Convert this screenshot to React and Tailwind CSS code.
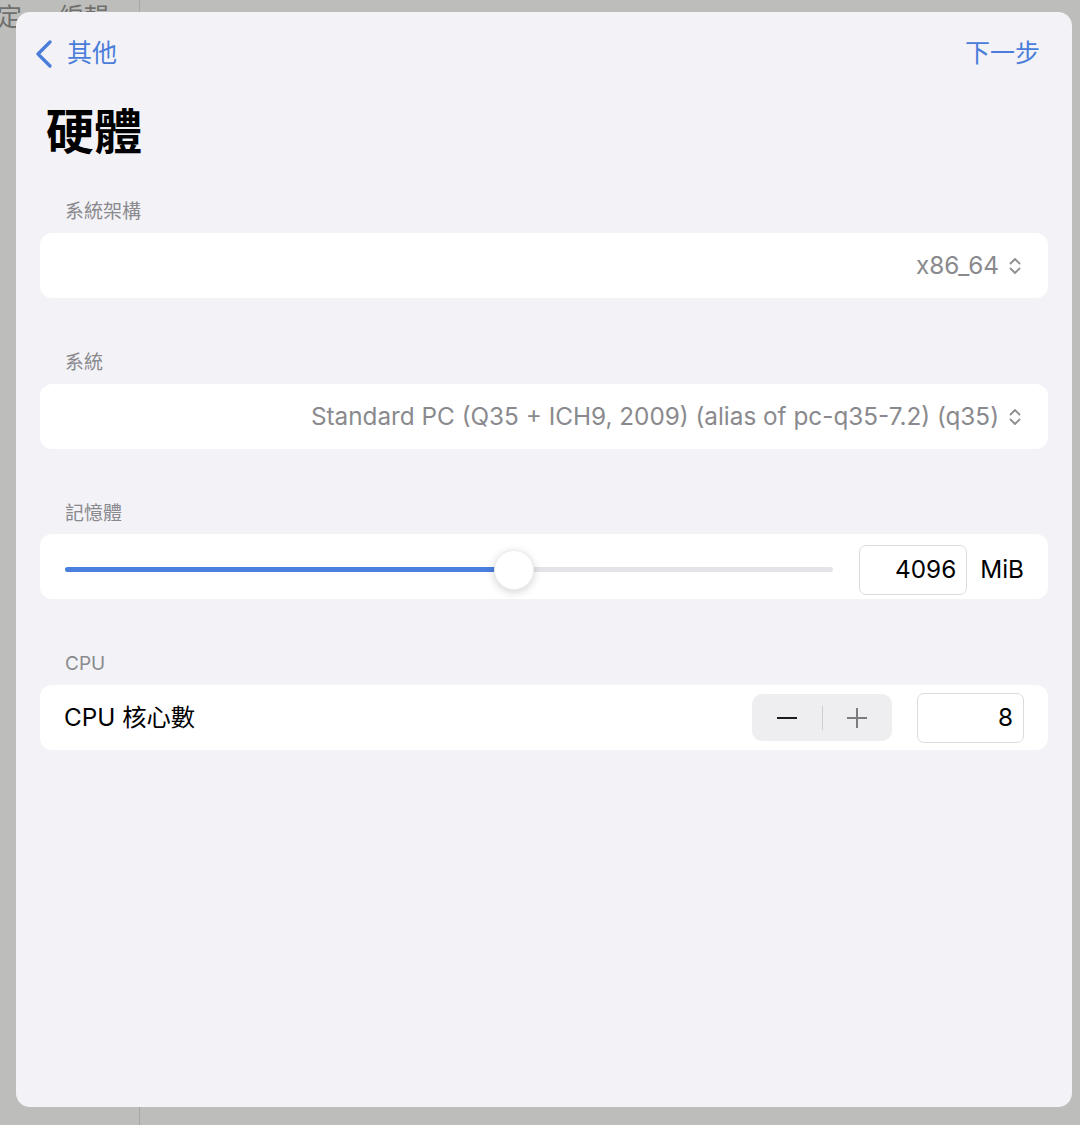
import { useState } from "react";

const font = { fontFamily: "Inter, 'Noto Sans CJK TC', 'Noto Sans', sans-serif" };

const UpDown = () => (
    <svg className="w-[14px] h-[20px] ml-[9px]" viewBox="0 0 14 20" fill="none" stroke="#8e8e93" strokeWidth="1.8" strokeLinecap="round" strokeLinejoin="round">
        <path d="M2.5 7.5L7 3l4.5 4.5" />
        <path d="M2.5 12.5L7 17l4.5-4.5" />
    </svg>
);

const Label = ({ children, first }) => (
    <div className={`h-[22px] leading-[22px] text-[19px] text-[#8a8a8e] pl-[25px] mb-[10px] ${first ? "mt-[41px]" : "mt-[54px]"}`}>
        {children}
    </div>
);

const Card = ({ children, className = "" }) => (
    <div className={`h-[65px] bg-white rounded-[12px] flex items-center ${className}`}>{children}</div>
);

export default function App() {
    const [mem] = useState(4096);
    const pct = 58.4;

    return (
        <div className="relative w-[1080px] h-[1125px] bg-[#bdbebb] overflow-hidden" style={font}>
            {/* page behind the sheet */}
            <div className="flex h-full">
                <div className="w-[140px] h-full border-r border-[#a7a8a4] flex items-start gap-[37px] pt-[2px] text-[25px] text-[#6f706d] leading-[30px]">
                    <span className="-ml-[3px]">定</span>
                    <span>編輯</span>
                </div>
            </div>

            {/* sheet */}
            <div className="absolute left-[16px] top-[12px] w-[1056px] h-[1095px] bg-[#f2f2f7] rounded-[14px] px-[24px] pt-[20px]">
                <div className="h-[44px] flex items-center justify-between">
                    <div className="flex items-center text-[#4a7dda]">
                        <svg className="w-[18px] h-[28px] ml-[-5px]" viewBox="0 0 18 28" fill="none" stroke="currentColor" strokeWidth="3.2" strokeLinecap="round" strokeLinejoin="round">
                            <path d="M15 2L3 14l12 12" />
                        </svg>
                        <span className="text-[25px] ml-[14px]">其他</span>
                    </div>
                    <span className="text-[25px] text-[#4a7dda] mr-[8px]">下一步</span>
                </div>

                <h1 className="mt-[28px] text-[48px] leading-[56px] font-bold text-black pl-[6px]">硬體</h1>

                <Label first>系統架構</Label>
                <Card className="justify-end pr-[26px]">
                    <span className="text-[24.3px] text-[#8a8a8e]">x86_64</span>
                    <UpDown />
                </Card>

                <Label>系統</Label>
                <Card className="justify-end pr-[26px]">
                    <span className="text-[24.3px] text-[#8a8a8e]">Standard PC (Q35 + ICH9, 2009) (alias of pc-q35-7.2) (q35)</span>
                    <UpDown />
                </Card>

                <Label>記憶體</Label>
                <Card className="pl-[25px] pr-[24px] pt-[6px] -mt-[1px]">
                    <div className="flex-1 relative h-[40px] flex items-center">
                        <div className="w-full h-[5px] rounded-full bg-[#e3e3e8]" />
                        <div className="absolute left-0 h-[5px] rounded-full bg-[#4a7fde]" style={{ width: `${pct}%` }} />
                        <div
                            className="absolute w-[40px] h-[40px] rounded-full bg-white shadow-[0_2px_8px_rgba(0,0,0,0.18)] border border-[#eeeeee]"
                            style={{ left: `calc(${pct}% - 20px)` }}
                        />
                    </div>
                    <div className="ml-[26px] w-[108px] h-[50px] rounded-[7px] border border-[#dcdcdc] flex items-center justify-end pr-[10px] text-[24.3px] text-black">
                        {mem}
                    </div>
                    <span className="ml-[13px] text-[24.3px] text-black">MiB</span>
                </Card>

                <Label>CPU</Label>
                <Card className="pl-[24px] pr-[24px]">
                    <span className="flex-1 text-[24.3px] text-black">CPU 核心數</span>
                    <div className="w-[140px] h-[47px] rounded-[10px] bg-[#eeeef0] flex items-center">
                        <div className="flex-1 flex justify-center">
                            <div className="w-[20px] h-[2px] bg-[#1c1c1e]" />
                        </div>
                        <div className="w-px h-[24px] bg-[#cfcfd2]" />
                        <div className="flex-1 flex justify-center">
                            <svg className="w-[20px] h-[20px]" viewBox="0 0 20 20" stroke="#7c7c80" strokeWidth="2">
                                <path d="M10 0v20M0 10h20" />
                            </svg>
                        </div>
                    </div>
                    <div className="ml-[25px] w-[107px] h-[50px] rounded-[7px] border border-[#dcdcdc] flex items-center justify-end pr-[10px] text-[24.3px] text-black">
                        8
                    </div>
                </Card>
            </div>
        </div>
    );
}
